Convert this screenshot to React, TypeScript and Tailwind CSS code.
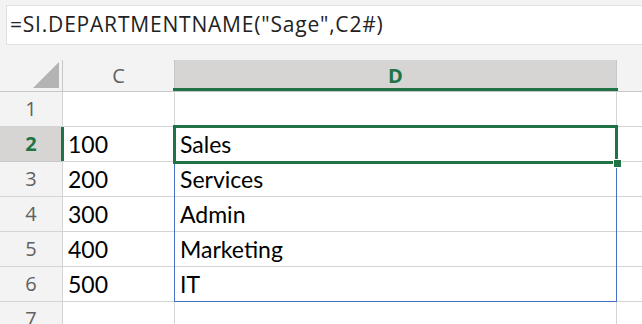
import React from "react";

const rows = [
  { n: 1, c: "", d: "" },
  { n: 2, c: "100", d: "Sales" },
  { n: 3, c: "200", d: "Services" },
  { n: 4, c: "300", d: "Admin" },
  { n: 5, c: "400", d: "Marketing" },
  { n: 6, c: "500", d: "IT" },
  { n: 7, c: "", d: "" },
];

const ui = { fontFamily: '"Open Sans", "Noto Sans", sans-serif' };
const cell = { fontFamily: 'Lato, "Liberation Sans", sans-serif' };

export default function App() {
  return (
    <div className="w-[642px] h-[324px] overflow-hidden bg-[#f3f3f3]" style={ui}>
      {/* Formula bar */}
      <div className="pt-[5px] pl-[6px]">
        <div className="h-[40px] bg-white border-y border-l border-[#e1e1e1] flex items-center pl-[3px] text-[21px] tracking-[0.8px] text-[#222]">
          =SI.DEPARTMENTNAME("Sage",C2#)
        </div>
      </div>

      {/* Sheet */}
      <div className="relative mt-[15px]">
        <div className="grid grid-cols-[63px_112px_442px_1fr]">
          {/* header row */}
          <div className="h-[32px] border-r border-b border-[#c8c8c8] flex items-end justify-end pr-[3px] pb-[3px]">
            <svg width="26" height="26" viewBox="0 0 26 26">
              <polygon points="26,0 26,26 0,26" fill="#b4b4b4" />
            </svg>
          </div>
          <div className="h-[32px] border-r border-b border-[#c8c8c8] flex items-center justify-center text-[20px] text-[#616161]">
            C
          </div>
          <div className="relative h-[32px] bg-[#d6d5d3] border-r border-b border-[#c8c8c8] flex items-center justify-center text-[20px] font-bold text-[#217346]">
            D
            <span className="absolute left-[-2px] right-[-2px] bottom-0 h-[3px] bg-[#217346]" />
          </div>
          <div className="h-[32px] border-b border-[#c8c8c8]" />

          {rows.map((r) => (
            <React.Fragment key={r.n}>
              <div
                className={
                  r.n === 2
                    ? "relative h-[35px] bg-[#d6d5d3] border-r border-b border-[#c8c8c8] flex items-center justify-center text-[20px] font-bold text-[#217346]"
                    : "h-[35px] border-r border-b border-[#d4d4d4] flex items-center justify-center text-[20px] text-[#616161]"
                }
              >
                {r.n}
                {r.n === 2 && (
                  <span className="absolute right-[-2px] top-0 bottom-0 w-[3px] bg-[#217346]" />
                )}
              </div>
              <div
                className="h-[35px] bg-white border-r border-b border-[#d4d4d4] flex items-center pl-[5px] text-[23px] text-black"
                style={cell}
              >
                {r.c}
              </div>
              <div
                className="h-[35px] bg-white border-r border-b border-[#d4d4d4] flex items-center pl-[5px] text-[23px] text-black"
                style={cell}
              >
                {r.d}
              </div>
              <div className="h-[35px] bg-white border-b border-[#d4d4d4]" />
            </React.Fragment>
          ))}
        </div>

        {/* spill range */}
        <div className="absolute left-[174px] top-[102px] w-[443px] h-[140px] border border-[#4472c4]" />
        {/* active cell */}
        <div className="absolute left-[173px] top-[65px] w-[445px] h-[39px] border-[3px] border-[#217346]" />
        {/* fill handle */}
        <div className="absolute left-[613px] top-[99px] w-[9px] h-[9px] bg-[#217346] border border-white" />
      </div>
    </div>
  );
}
